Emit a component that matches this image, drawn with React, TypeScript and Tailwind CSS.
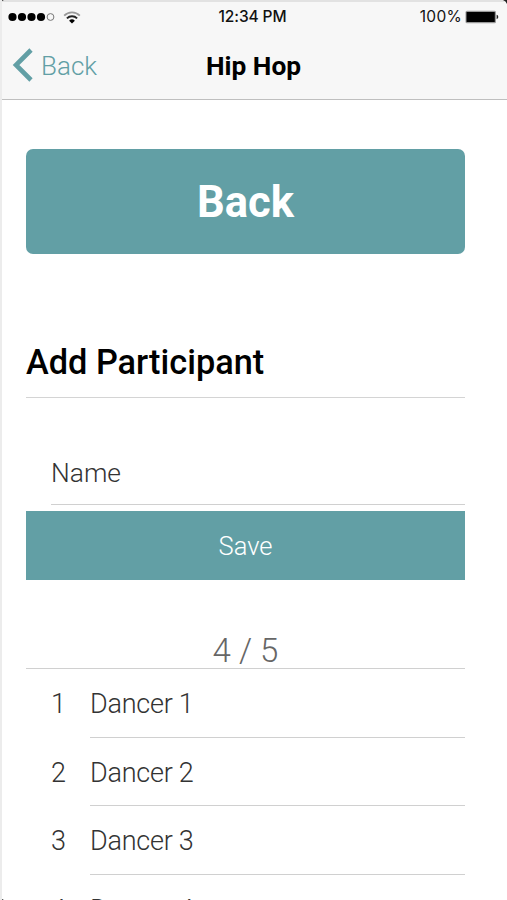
import React from 'react';

const SIGNAL_DOTS = [true, true, true, true, false];
const DANCERS = ['Dancer 1', 'Dancer 2', 'Dancer 3', 'Dancer 4'];

function StatusBar() {
  return (
    <div className="grid h-[30px] grid-cols-[1fr_auto_1fr] items-center pt-[4px] pr-[8px] pl-[6px] font-[Inter,sans-serif] text-[15px] leading-[24px] text-[#111]">
      <div className="flex items-center">
        <svg width="47" height="10" viewBox="0 0 47 10">
          {SIGNAL_DOTS.map((filled, i) => (
            <circle
              key={i}
              cx={4.5 + i * 9.5}
              cy="5"
              r={filled ? 4.1 : 3.4}
              fill={filled ? '#000' : 'none'}
              stroke={filled ? 'none' : '#777'}
              strokeWidth="1"
            />
          ))}
        </svg>
        <svg className="ml-[8px]" width="18" height="13" viewBox="0 0 18 13" fill="none">
          <path d="M1.2 4.6a11 11 0 0 1 15.6 0" stroke="#999" strokeWidth="1.8" />
          <path d="M3.9 7.3a7.2 7.2 0 0 1 10.2 0" stroke="#222" strokeWidth="1.9" />
          <path d="M9 12.6 6.1 9.7a4.1 4.1 0 0 1 5.8 0Z" fill="#000" />
        </svg>
      </div>
      <span className="mr-[1px] -ml-[1px] text-[15.5px] font-medium tracking-[-0.1px]">12:34 PM</span>
      <div className="flex items-center justify-end gap-[3px]">
        <span className="text-[15.5px] tracking-[0.3px]">100%</span>
        <svg width="34" height="14" viewBox="0 0 34 14">
          <rect x="0.5" y="0.8" width="30.5" height="12.4" rx="1.5" fill="#999" />
          <rect x="1.5" y="2" width="28.3" height="10" rx="0.5" fill="#000" />
          <path d="M31.6 4.8c2.2.6 2.2 3.8 0 4.4Z" fill="#222" />
        </svg>
      </div>
    </div>
  );
}

function NavBar() {
  return (
    <div className="grid h-[69px] grid-cols-[1fr_auto_1fr] items-center pt-[1px] pr-[12px] pl-[10px]">
      <div className="flex items-center gap-[8px] text-[26px] font-light text-[#629fa5]">
        <svg width="21" height="34" viewBox="0 0 21 34" fill="none">
          <path d="M19 2 4 17l15 15" stroke="#629fa5" strokeWidth="4.6" />
        </svg>
        <span className="pt-[1px] leading-[32px]">Back</span>
      </div>
      <h1 className="pt-[1px] text-[26.3px] leading-[32px] font-bold text-black">Hip Hop</h1>
    </div>
  );
}

export default function App() {
  return (
    <div className="relative h-[900px] w-[507px] overflow-hidden border-l-2 border-[#ececec] bg-white font-[Roboto,sans-serif] text-[#333]">
      <header className="h-[100px] border-b border-[#bfbfbf] bg-[#f7f7f7]">
        <StatusBar />
        <NavBar />
      </header>
      <main className="mr-[42px] ml-[24px] pt-[49px]">
        <button className="block h-[105px] w-full rounded-[7px] bg-[#629fa5] text-[43.5px] leading-[107px] font-bold text-white">
          Back
        </button>
        <h2 className="mt-[76px] h-[68px] border-b border-[#d4d4d4] pt-[12px] text-[34.3px] leading-[40px] font-medium text-black">
          Add Participant
        </h2>
        <div className="mt-[42px] ml-[25px] h-[65px] border-b border-[#d0d0d0] pt-[17px] text-[26.4px] leading-[32px] font-light">
          Name
        </div>
        <button className="mt-[6px] block h-[69px] w-full bg-[#629fa5] text-[25.5px] leading-[70px] font-light text-white">
          Save
        </button>
        <div className="mt-[49px] h-[40px] border-b border-[#d0d0d0] pt-[2px] text-center text-[33px] leading-[40px] font-light text-[#666]">
          4 / 5
        </div>
        <ul>
          {DANCERS.map((name, i) => (
            <li
              key={name}
              className="flex h-[68.5px] pl-[25px] text-[27px] leading-[70px] font-light tracking-[-0.25px]"
            >
              <span className="w-[39px] shrink-0">{i + 1}</span>
              <span className="flex-1 border-b border-[#d0d0d0]">{name}</span>
            </li>
          ))}
        </ul>
      </main>
      <div className="absolute top-0 -left-[2px] h-[2px] w-[507px] bg-[#e2e2e2]" />
      <svg className="absolute top-0 -left-[2px]" width="507" height="900">
        <path d="M0 0H4Q1 1 0 4ZM507 0H503Q506 1 507 4ZM0 900V896Q1 899 4 900Z" fill="#222" />
      </svg>
    </div>
  );
}
